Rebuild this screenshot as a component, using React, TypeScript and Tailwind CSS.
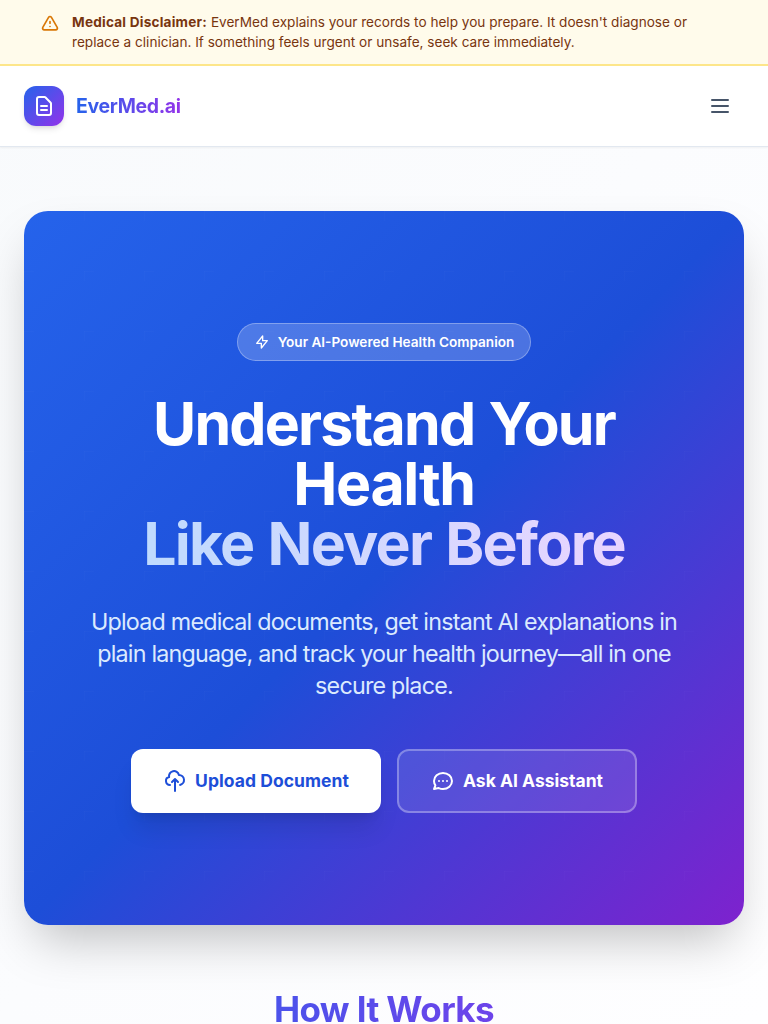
import type { ReactNode } from "react";

function Icon({ d, className }: { d: string; className: string }) {
  return (
    <svg className={className} fill="none" viewBox="0 0 24 24" stroke="currentColor" strokeWidth={2} strokeLinecap="round" strokeLinejoin="round" aria-hidden="true">
      <path d={d} />
    </svg>
  );
}

const icons = {
  warning:
    "M12 9v2m0 4h.01m-6.938 4h13.856c1.54 0 2.502-1.667 1.732-3L13.732 4c-.77-1.333-2.694-1.333-3.464 0L3.34 16c-.77 1.333.192 3 1.732 3z",
  document:
    "M9 12h6m-6 4h6m2 5H7a2 2 0 01-2-2V5a2 2 0 012-2h5.586a1 1 0 01.707.293l5.414 5.414a1 1 0 01.293.707V19a2 2 0 01-2 2z",
  menu: "M4 6h16M4 12h16M4 18h16",
  bolt: "M13 10V3L4 14h7v7l9-11h-7z",
  upload:
    "M7 16a4 4 0 01-.88-7.903A5 5 0 1115.9 6L16 6a5 5 0 011 9.9M15 13l-3-3m0 0l-3 3m3-3v12",
  chat: "M8 12h.01M12 12h.01M16 12h.01M21 12c0 4.418-4.03 8-9 8a9.863 9.863 0 01-4.255-.949L3 20l1.395-3.72C3.512 15.042 3 13.574 3 12c0-4.418 4.03-8 9-8s9 3.582 9 8z",
};

function Disclaimer() {
  return (
    <div className="border-b-2 border-[#fde68a] bg-[#fffbeb] px-10 py-3">
      <div className="flex items-start gap-3">
        <Icon d={icons.warning} className="mt-0.5 h-5 w-5 shrink-0 text-[#d97706]" />
        <p className="text-[13.6px] leading-5 text-[#78350f]">
          <strong className="font-bold tracking-[0.22px]">Medical Disclaimer:</strong> EverMed explains your records to help you prepare. It
          doesn't diagnose or replace a clinician. If something feels urgent or unsafe, seek care immediately.
        </p>
      </div>
    </div>
  );
}

function Header() {
  return (
    <header className="relative border-b border-[#e2e8f0] bg-white shadow-[0_1px_2px_0_rgba(0,0,0,0.05)]">
      <div className="flex h-20 items-center justify-between px-6">
        <a href="#" className="flex items-center gap-3">
          <span className="flex h-10 w-10 items-center justify-center rounded-xl bg-linear-to-br/srgb from-[#2563eb] to-[#9333ea] text-white shadow-md">
            <Icon d={icons.document} className="h-6 w-6" />
          </span>
          <span className="bg-linear-to-r/srgb from-[#2563eb] to-[#9333ea] bg-clip-text text-[19.5px] leading-7 font-bold tracking-[-0.35px] text-transparent">
            EverMed.ai
          </span>
        </a>
        <button className="p-3 text-[#475569]" aria-label="Menu">
          <Icon d={icons.menu} className="h-6 w-6" />
        </button>
      </div>
    </header>
  );
}

function Action({ icon, className, children }: { icon: string; className: string; children: ReactNode }) {
  return (
    <button className={`flex h-16 items-center justify-center gap-2 rounded-xl text-[17.5px] leading-7 font-bold ${className}`}>
      <Icon d={icon} className="h-6 w-6" />
      <span>{children}</span>
    </button>
  );
}

function GridTexture() {
  return (
    <svg className="pointer-events-none absolute inset-0 h-full w-full" aria-hidden="true">
      <defs>
        <pattern id="grid" width="60" height="60" patternUnits="userSpaceOnUse">
          <path d="M10 0H0V10" fill="none" stroke="white" strokeOpacity="0.02" strokeWidth="1" />
        </pattern>
      </defs>
      <rect width="100%" height="100%" fill="url(#grid)" />
    </svg>
  );
}

function Hero() {
  return (
    <section className="relative rounded-3xl bg-linear-to-br/srgb from-[#2563eb] via-[#1d4ed8] to-[#7e22ce] shadow-2xl">
      <GridTexture />
      <div className="relative flex h-[714px] flex-col items-center px-16 py-28 text-center text-white">
        <div className="flex h-[38px] items-center gap-2 rounded-full border border-white/30 bg-white/20 px-4 text-[13.6px] font-semibold">
          <Icon d={icons.bolt} className="h-4 w-4" />
          <span>Your AI-Powered Health Companion</span>
        </div>
        <h1 className="mt-[33px] text-[59px] leading-[60px] font-bold tracking-[-1.8px] [word-spacing:2px]">
          Understand Your
          <br />
          <span className="tracking-[-1.3px]">Health</span>
          <span className="block bg-linear-to-r/srgb from-[#bfdbfe] to-[#e9d5ff] bg-clip-text text-transparent">
            Like Never Before
          </span>
        </h1>
        <p className="mt-8 w-[600px] text-[23.3px] leading-8 tracking-[-0.79px] text-[#dbeafe]">
          Upload medical documents, get instant AI explanations in plain language, and track your health journey—all in
          one secure place.
        </p>
        <div className="mt-[47px] flex gap-4">
          <Action icon={icons.upload} className="w-[250px] bg-white tracking-[0.05px] text-[#1d4ed8] shadow-xl">
            Upload Document
          </Action>
          <Action icon={icons.chat} className="w-[240px] border-2 border-white/30 bg-white/10">
            Ask AI Assistant
          </Action>
        </div>
      </div>
    </section>
  );
}

export default function App() {
  return (
    <div className="h-screen overflow-hidden bg-linear-to-br/srgb from-[#f8fafc] via-[#fbfcfe] to-[#fefeff] font-['Inter',sans-serif] antialiased">
      <Disclaimer />
      <Header />
      <main className="px-6 pt-16">
        <Hero />
        <h2 className="mt-16 bg-linear-to-r/srgb from-[#2563eb] to-[#9333ea] bg-clip-text text-center text-[35px] leading-10 font-bold tracking-[-0.6px] text-transparent">
          How It Works
        </h2>
      </main>
    </div>
  );
}
